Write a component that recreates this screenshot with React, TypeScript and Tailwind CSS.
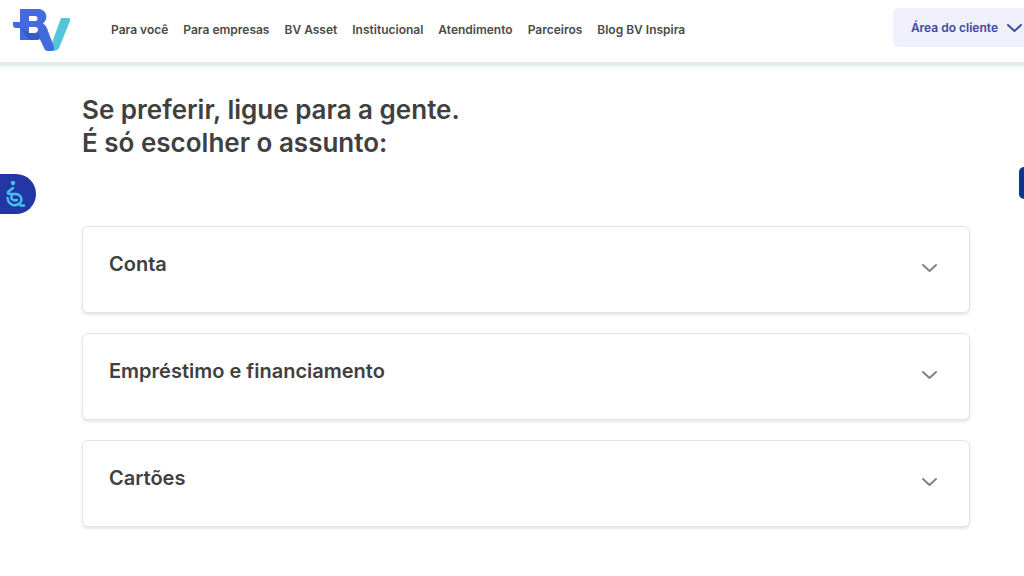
import React, { useState } from 'react';

const NAV_LINKS = [
    'Para você',
    'Para empresas',
    'BV Asset',
    'Institucional',
    'Atendimento',
    'Parceiros',
    'Blog BV Inspira',
];

const TOPICS = [
    { id: 'conta', title: 'Conta', text: 'Fale com a gente sobre a sua conta.' },
    { id: 'emprestimo', title: 'Empréstimo e financiamento', text: 'Fale com a gente sobre o seu contrato.' },
    { id: 'cartoes', title: 'Cartões', text: 'Fale com a gente sobre os seus cartões.' },
];

function Logo() {
    return (
        <svg width="58" height="44" viewBox="0 0 58 44" aria-hidden="true">
            <path d="M48 10H55Q58 10 57 13L46 40Q44 43 40 43H36Z" fill="#52c5db" />
            <path
                fillRule="evenodd"
                d="M7 1H25C34 1 36 11 30 15.500C33 17 34 20 35 23L41 39Q42 43 38 43H35Q32 43 31 40L27 31Q25 32 22 32H7V20H3Q0 20 0 17V14H7ZM16 8V13H22Q24.500 13 24.500 10.500Q24.500 8 22 8ZM16 19V25H22Q25 25 25 22Q25 19 22 19Z"
                fill="#436bdc"
            />
            <path d="M7 20L16 24.500V25H22Q25 25 25 22L29 35L27 31Q25 32 22 32H16Z" fill="#385cc6" />
        </svg>
    );
}

function Chevron({ className }: { className?: string }) {
    return (
        <svg
            width="16"
            height="10"
            viewBox="0 0 16 10"
            fill="none"
            stroke="currentColor"
            strokeWidth="1.9"
            strokeLinecap="round"
            strokeLinejoin="round"
            className={className}
            aria-hidden="true"
        >
            <path d="M2 2L8.500 8L15 2" />
        </svg>
    );
}

function Header() {
    return (
        <header className="flex items-start justify-between border-b-4 border-[#e6ebee] shadow-[0_2px_4px_#f3f8fa] h-[66px] pl-[13px]">
            <div className="flex items-start">
                <a href="#inicio" aria-label="BV" className="pt-2">
                    <Logo />
                </a>
                <nav className="flex gap-[15px] pl-10 pt-[22px] text-xs leading-4 font-semibold text-[#4a4a4a]">
                    {NAV_LINKS.map(label => (
                        <a key={label} href="#menu" className="whitespace-nowrap">{label}</a>
                    ))}
                </nav>
            </div>
            <button
                type="button"
                className="mt-2 flex h-[39px] shrink-0 items-center gap-2 rounded-l-md bg-[#eff0fc] pl-[18px] pr-[2px] text-xs font-semibold text-[#3c4a9e]"
            >
                Área do cliente
                <Chevron />
            </button>
        </header>
    );
}

function TopicCard({ title, text }: { title: string; text: string }) {
    const [open, setOpen] = useState(false);

    return (
        <section className="rounded-md border border-[#e4e4e4] bg-white shadow-[0_2px_3px_rgba(0,0,0,0.1)]">
            <h2>
                <button
                    type="button"
                    aria-expanded={open}
                    onClick={() => setOpen(!open)}
                    className="flex w-full items-start justify-between pl-[26px] pr-8 pt-[23px] pb-[34px] text-left text-xl leading-7 font-semibold text-[#404040]"
                >
                    {title}
                    <Chevron className={open ? 'mt-[13px] rotate-180 text-[#808080]' : 'mt-[13px] text-[#808080]'} />
                </button>
            </h2>
            {open && <p className="px-7 pb-6 text-sm text-[#404040]">{text}</p>}
        </section>
    );
}

export default function App() {
    return (
        <div className="min-h-screen overflow-x-hidden bg-white font-['Inter',sans-serif]">
            <Header />
            <main className="pt-[27px] pl-[82px] pr-[54px] pb-12">
                <h1 className="text-[26px] leading-[33px] font-semibold text-[#404040]">
                    Se preferir, ligue para a gente.
                    <br />
                    É só escolher o assunto:
                </h1>
                <div className="mt-[67px] flex flex-col gap-5">
                    {TOPICS.map(topic => (
                        <TopicCard key={topic.id} title={topic.title} text={topic.text} />
                    ))}
                </div>
            </main>

            {/* Floating widgets */}
            <button
                type="button"
                aria-label="Acessibilidade em Libras"
                className="fixed left-0 top-[174px] flex h-10 w-9 items-center rounded-r-full bg-[#2237a5] pl-1"
            >
                <svg width="22" height="28" viewBox="0 0 22 28" fill="none" stroke="#45c1ee" strokeWidth="2.4" strokeLinecap="round" strokeLinejoin="round" aria-hidden="true">
                    <circle cx="9" cy="3" r="2.2" fill="#45c1ee" stroke="none" />
                    <path d="M9 8L4 12Q3 14 6 14H11C18 14 19 21 15 24L17 25.500H20" />
                    <path d="M3.500 18C4 23 8 26 12 25L15 24" />
                    <path d="M8 15C6 19 9 21 13 20" />
                </svg>
            </button>
            <button
                type="button"
                aria-label="Abrir chat"
                className="fixed right-0 top-[167px] h-8 w-[5px] rounded-l-md bg-[#07378f]"
            />
        </div>
    );
}
